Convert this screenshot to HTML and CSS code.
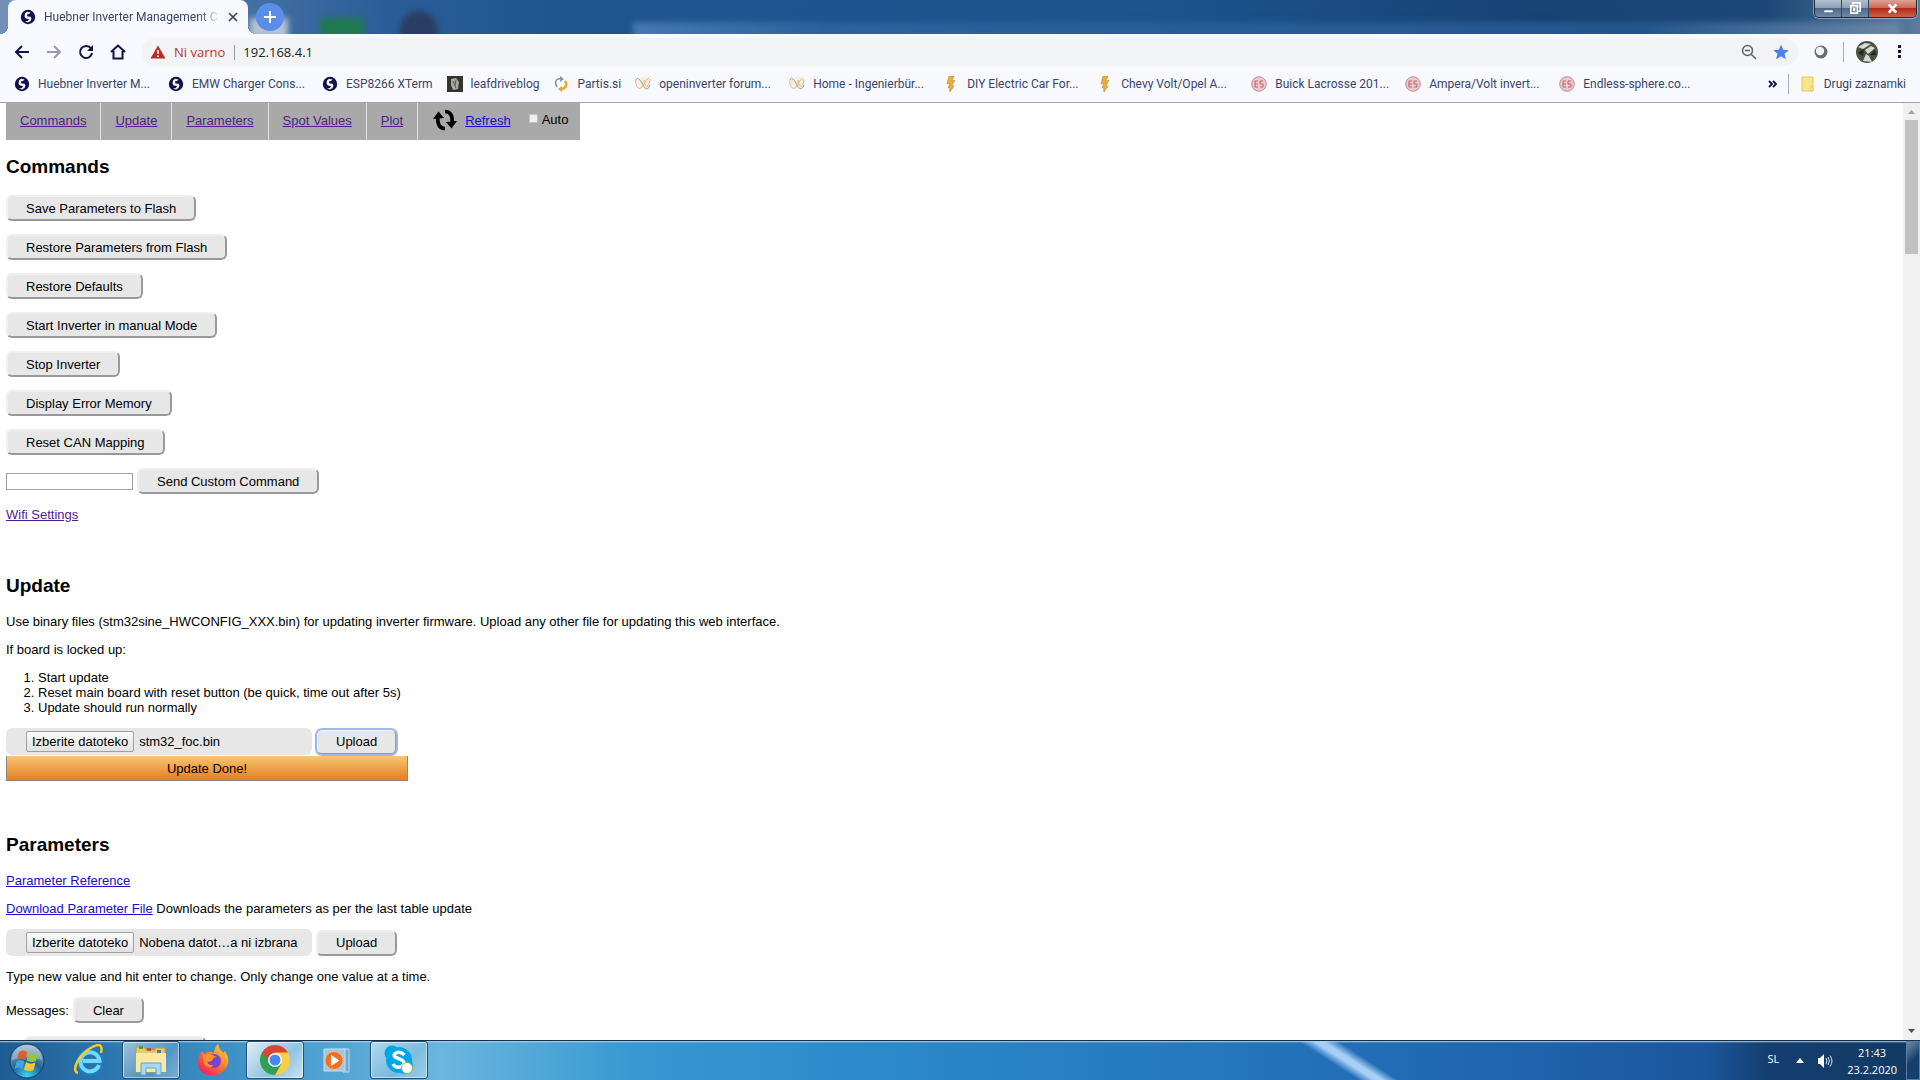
FILE: index.html
```
<!DOCTYPE html>
<html lang="sl">

<head>
    <meta charset="utf-8">
    <meta name="viewport" content="width=device-width, initial-scale=1">
    <title>Huebner Inverter Management Console</title>
    <link rel="stylesheet" href="styles.css">
</head>

<body>

    <!-- shared icons -->
    <svg class="sprite" aria-hidden="true">
        <symbol id="globe" viewBox="0 0 16 16">
            <circle cx="8" cy="8" r="7.200" fill="#15104a"/>
            <path d="M7 2.800 10.500 3.500 9 5 6.800 5.500 7.500 7.500 10.500 7.800 11.500 9.500 10.500 12 8 13.500 5 12.500 8 12 9 10 5.800 9.500 4.500 7.500 5 4.500z" fill="#f7f9fe"/>
        </symbol>
        <symbol id="wave" viewBox="0 0 16 16">
            <circle cx="9" cy="7" r="6.500" fill="#faf1d8"/>
            <path d="M1 4C3 0 6 5 8 9S13 15 15 9" fill="none" stroke="#8398b4"/>
            <path d="M1 4C0 10 4 15 7 11S10 4 14 2M9 4C10 12 14 13 15 3" fill="none" stroke="#eaa98a"/>
        </symbol>
        <symbol id="bolt" viewBox="0 0 16 16">
            <path d="M6 0 11 0 9 5 12 4 9 10 11 10 7 16 6.500 11 5 12 7 7 4 8z" fill="#e3b13d" stroke="#b98b35" stroke-width=".6"/>
        </symbol>
        <symbol id="es" viewBox="0 0 16 16">
            <circle cx="8" cy="8" r="7.300" fill="#e9c9cb" stroke="#c58c92"/>
            <path d="M7 5H4V11H7M4 8H7M12 5H9V8H12V11H9" fill="none" stroke="#b9646c"/>
        </symbol>
    </svg>

    <div class="window">

        <!-- TABS -->
        <header class="tabs">
            <div class="tab">
                <svg class="icon"><use href="#globe"/></svg>
                <span class="tab-title">Huebner Inverter Management C</span>
                <button class="tab-close" aria-label="Zapri zavihek"><svg viewBox="0 0 10 10"><path d="M1 1 9 9M9 1 1 9" stroke="#3a4468" stroke-width="1.700"/></svg></button>
            </div>
            <button class="new-tab" aria-label="Nov zavihek"><svg viewBox="0 0 12 12"><path d="M6 0V12M0 6H12" stroke="#fff" stroke-width="2"/></svg></button>
            <div class="desktop-peek">
                <i class="peek-white"></i>
                <i class="peek-green"></i>
                <i class="peek-dark"></i>
                <i class="peek-window"></i>
            </div>
            <div class="window-buttons">
                <button class="minimize" aria-label="Minimiraj"><svg viewBox="0 0 14 14"><path d="M2 8.500H12V11.500H2z" fill="#fff" stroke="#4b5a70" stroke-width=".7"/></svg></button>
                <button class="restore" aria-label="Obnovi"><svg viewBox="0 0 14 14"><path d="M4 3V1H12V10H10M2 4H9V12H2zM5 7V9H6V7z" fill="none" stroke="#fff" stroke-width="1.800"/></svg></button>
                <button class="close" aria-label="Zapri"><svg viewBox="0 0 14 14"><path d="M3 2.500 11 11.500M11 2.500 3 11.500" stroke="#fff" stroke-width="3"/></svg></button>
            </div>
        </header>

        <!-- TOOLBAR -->
        <div class="toolbar">
            <button class="tool" aria-label="Nazaj"><svg viewBox="0 0 16 16"><path d="M15 8H2M8 2 2 8 8 14" fill="none" stroke="#15104a" stroke-width="2"/></svg></button>
            <button class="tool" aria-label="Naprej"><svg viewBox="0 0 16 16"><path d="M1 8H14M8 2 14 8 8 14" fill="none" stroke="#9a98b4" stroke-width="2"/></svg></button>
            <button class="tool" aria-label="Znova naloži"><svg viewBox="0 0 16 16"><path d="M13 4.500A6 6 0 1 0 14 9" fill="none" stroke="#15104a" stroke-width="2"/><path d="M15 1V7H9z" fill="#15104a"/></svg></button>
            <button class="tool" aria-label="Domov"><svg viewBox="0 0 16 16"><path d="M1 8 8 1.500 15 8M3.500 7V14.500H12.500V7" fill="none" stroke="#15104a" stroke-width="2"/></svg></button>
            <div class="address">
                <svg class="icon" viewBox="0 0 16 16"><path d="M8 1.500 15.500 14.500H.5z" fill="#b52f27"/><path d="M8 6V10M8 11.500V13" stroke="#fff" stroke-width="1.600"/></svg>
                <span class="not-secure">Ni varno</span>
                <input class="url" type="text" value="192.168.4.1" aria-label="Naslov">
                <svg class="icon" viewBox="0 0 16 16"><circle cx="6.500" cy="6.500" r="5" fill="none" stroke="#5f6368" stroke-width="1.500"/><path d="M4 6.500H9M10.200 10.200 15 15" stroke="#5f6368" stroke-width="1.500"/></svg>
                <svg class="icon" viewBox="0 0 16 16"><path d="M8 .5 10.200 5.800 15.800 6.200 11.500 9.800 12.900 15.300 8 12.300 3.100 15.300 4.500 9.800.2 6.200 5.800 5.800z" fill="#4c7ff0"/></svg>
            </div>
            <svg class="icon extension" viewBox="0 0 16 16"><circle cx="8" cy="8" r="6.500" fill="#6c6c6c"/><circle cx="7" cy="7" r="4.200" fill="#f2f2f2"/></svg>
            <i class="divider"></i>
            <svg class="avatar" viewBox="0 0 22 22"><circle cx="11" cy="11" r="11" fill="#4c5240"/><path d="M2 6 9 2 15 3 7 8zM9 9 15 5 19 7 12 13zM7 20 10 13 13 15 16 21z" fill="#d5dad2"/><path d="M2 12 8 8 7 15zM14 14 19 9 20 14z" fill="#1f2721"/></svg>
            <button class="more" aria-label="Meni"><svg viewBox="0 0 4 14"><path d="M0 0H3V3H0zM0 5H3V8H0zM0 10H3V13H0z" fill="#15104a"/></svg></button>
        </div>

        <!-- BOOKMARKS -->
        <nav class="bookmarks">
            <a class="bookmark long" href="#"><svg class="icon"><use href="#globe"/></svg>Huebner Inverter M...</a>
            <a class="bookmark long" href="#"><svg class="icon"><use href="#globe"/></svg>EMW Charger Cons...</a>
            <a class="bookmark" href="#"><svg class="icon"><use href="#globe"/></svg>ESP8266 XTerm</a>
            <a class="bookmark" href="#"><svg class="icon" viewBox="0 0 16 16"><path d="M0 0H16V16H0z" fill="#34352f"/><path d="M4 3 9 2 12 6 11 13 6 14 4 9z" fill="#aaa99c"/><path d="M6 5 9 12M9 4 8 9" stroke="#55564e"/></svg>leafdriveblog</a>
            <a class="bookmark" href="#"><svg class="icon" viewBox="0 0 16 16"><path d="M8 3C3 2 1 6 4 11" fill="none" stroke="#8c95a0" stroke-width="1.500"/><path d="M7 0 11 3 7 6z" fill="#8c95a0"/><path d="M12 5C15 9 12 13 8 13" fill="none" stroke="#e8ac2b" stroke-width="2.500"/><path d="M9 10 5 13 9 16z" fill="#e8ac2b"/></svg>Partis.si</a>
            <a class="bookmark long" href="#"><svg class="icon"><use href="#wave"/></svg>openinverter forum...</a>
            <a class="bookmark long" href="#"><svg class="icon"><use href="#wave"/></svg>Home - Ingenierbür...</a>
            <a class="bookmark long" href="#"><svg class="icon"><use href="#bolt"/></svg>DIY Electric Car For...</a>
            <a class="bookmark long" href="#"><svg class="icon"><use href="#bolt"/></svg>Chevy Volt/Opel A...</a>
            <a class="bookmark long" href="#"><svg class="icon"><use href="#es"/></svg>Buick Lacrosse 201...</a>
            <a class="bookmark long" href="#"><svg class="icon"><use href="#es"/></svg>Ampera/Volt invert...</a>
            <a class="bookmark long" href="#"><svg class="icon"><use href="#es"/></svg>Endless-sphere.co...</a>
            <button class="overflow" aria-label="Več zaznamkov"><svg viewBox="0 0 10 8"><path d="M1 1 4 4 1 7M5 1 8 4 5 7" fill="none" stroke="#15104a" stroke-width="1.800"/></svg></button>
            <i class="divider"></i>
            <a class="bookmark other" href="#"><svg class="icon" viewBox="0 0 16 16"><path d="M2 1H13V15H2z" fill="#fbe58a" stroke="#e3c75c"/><path d="M11 10H13V15H11z" fill="#fff0ae" stroke="#e3c75c"/></svg>Drugi zaznamki</a>
        </nav>

        <div class="viewport">
            <main class="page">

                <!-- PAGE MENU -->
                <nav class="menu">
                    <a class="visited" href="#commands">Commands</a>
                    <a class="visited" href="#update">Update</a>
                    <a class="visited" href="#parameters">Parameters</a>
                    <a class="visited" href="#spot">Spot Values</a>
                    <a class="visited" href="#plot">Plot</a>
                    <div class="refresh">
                        <svg viewBox="0 0 24 24"><path d="M12 20.500C7 20.500 4.500 17 4.800 10M12 3.500C17 3.500 19.500 7 19.200 14" fill="none" stroke="#000" stroke-width="3.600"/><path d="M0 11 5.500 3.500 11 10zM24 13 18.500 20.500 13 14z" fill="#000"/></svg>
                        <a href="#">Refresh</a>
                        <label class="auto"><input type="checkbox">Auto</label>
                    </div>
                </nav>

                <section id="commands">
                    <h2>Commands</h2>
                    <div class="row"><button class="btn">Save Parameters to Flash</button></div>
                    <div class="row"><button class="btn">Restore Parameters from Flash</button></div>
                    <div class="row"><button class="btn">Restore Defaults</button></div>
                    <div class="row"><button class="btn">Start Inverter in manual Mode</button></div>
                    <div class="row"><button class="btn">Stop Inverter</button></div>
                    <div class="row"><button class="btn">Display Error Memory</button></div>
                    <div class="row"><button class="btn">Reset CAN Mapping</button></div>
                    <div class="row">
                        <input class="command" type="text" aria-label="Custom command">
                        <button class="btn">Send Custom Command</button>
                    </div>
                    <p><a class="visited" href="#">Wifi Settings</a></p>
                </section>

                <section id="update">
                    <h2>Update</h2>
                    <p>Use binary files (stm32sine_HWCONFIG_XXX.bin) for updating inverter firmware. Upload any other file for updating this web interface.</p>
                    <p>If board is locked up:</p>
                    <ol>
                        <li>Start update</li>
                        <li>Reset main board with reset button (be quick, time out after 5s)</li>
                        <li>Update should run normally</li>
                    </ol>
                    <div class="row upload">
                        <label class="file"><span class="choose">Izberite datoteko</span>stm32_foc.bin<input type="file"></label>
                        <button class="btn focused">Upload</button>
                    </div>
                    <div class="progress">Update Done!</div>
                </section>

                <section id="parameters">
                    <h2>Parameters</h2>
                    <p><a href="#">Parameter Reference</a></p>
                    <p><a href="#">Download Parameter File</a> Downloads the parameters as per the last table update</p>
                    <div class="row">
                        <label class="file"><span class="choose">Izberite datoteko</span>Nobena datot…a ni izbrana<input type="file"></label>
                        <button class="btn">Upload</button>
                    </div>
                    <p>Type new value and hit enter to change. Only change one value at a time.</p>
                    <div class="row">Messages: <button class="btn">Clear</button></div>
                    <div class="row indent"><button class="btn" aria-label="Toggle parameters"></button></div>
                </section>
            </main>

            <div class="scrollbar">
                <svg viewBox="0 0 17 17"><path d="M5 11 8.500 7 12 11z" fill="#a3a3a3"/></svg>
                <i class="thumb"></i>
                <svg viewBox="0 0 17 17"><path d="M5 6 8.500 10 12 6z" fill="#505050"/></svg>
            </div>
        </div>

        <!-- TASKBAR -->
        <footer class="taskbar">
            <button class="start" aria-label="Start">
                <svg viewBox="0 0 36 36">
                    <defs>
                        <radialGradient id="orb" cx=".5" cy=".95" r=".9"><stop offset="0" stop-color="#3fd5f5"/><stop offset=".5" stop-color="#1d6598"/><stop offset="1" stop-color="#93adc2"/></radialGradient>
                    </defs>
                    <circle cx="18" cy="18" r="17" fill="url(#orb)" stroke="#123d63"/>
                    <path d="M3 17A15 15 0 0 1 33 17Q18 12 3 17z" fill="#fff" opacity=".3"/>
                    <path d="M10 9Q14 6 18 9L16 17Q12 14 8 17z" fill="#e8592b"/>
                    <path d="M19.500 10Q24 13 29 10L27 18Q22 20 17.500 17.500z" fill="#94c83d"/>
                    <path d="M7.500 18.500Q12 16 15.500 18.500L13.500 26Q10 23 5.500 26z" fill="#40a5e0"/>
                    <path d="M17 19Q21 22 26.500 19.500L24.500 27Q20 29 15 26.500z" fill="#fbc52d"/>
                </svg>
            </button>
            <button class="task" aria-label="Internet Explorer">
                <svg viewBox="0 0 32 32">
                    <path d="M27 21A10.500 10.500 0 1 1 27.500 17H11" fill="none" stroke="#1680c8" stroke-width="6"/>
                    <path d="M26 21A9.500 9.500 0 1 1 26.500 17H10" fill="none" stroke="#74d8fa" stroke-width="4"/>
                    <path d="M5 29C-2 27 5 12 16 5S30 1 28 9" fill="none" stroke="#f5cb24" stroke-width="2.500"/>
                </svg>
            </button>
            <button class="task open" aria-label="Raziskovalec">
                <svg viewBox="0 0 32 32">
                    <path d="M1 6V3H9L11 6H20V4H30V28H1z" fill="#ecc965" stroke="#c69d3c"/>
                    <path d="M4 2H8V5H4z" fill="#3aa35b"/><path d="M12 4H16V7H12z" fill="#d9443a"/><path d="M22 6H26V9H22z" fill="#3a82c9"/>
                    <path d="M1 9H31V28H1z" fill="#fbe9a2"/>
                    <path d="M6 31V19H26V31H21V24H11V31z" fill="#a7d9f5" stroke="#5ba7d9"/>
                </svg>
            </button>
            <button class="task" aria-label="Firefox">
                <svg viewBox="0 0 32 32">
                    <defs><linearGradient id="fox" x1="1" y1="0" x2=".2" y2="1"><stop offset="0" stop-color="#ffe14a"/><stop offset=".45" stop-color="#ff8a26"/><stop offset="1" stop-color="#ee1f5c"/></linearGradient></defs>
                    <path d="M5 7 8 10Q12 6 17 9Q17 4 21 0Q22 5 26 9L28 7Q36 20 25 28C17 34 6 32 2 24Q-1 15 5 7z" fill="url(#fox)"/>
                    <circle cx="17" cy="17" r="7" fill="#7b42cf"/>
                    <path d="M6 11Q13 9 20 13Q16 13 15 17L10 18Q12 22 17 21Q12 26 7 20z" fill="#ff9424"/>
                </svg>
            </button>
            <button class="task open active" aria-label="Chrome">
                <svg viewBox="0 0 32 32">
                    <circle cx="16" cy="16" r="15" fill="#fbce43"/>
                    <path d="M16 16 3 8.500A15 15 0 0 0 16 31L22.500 19.800z" fill="#2f9e58"/>
                    <path d="M16 16H9.500L3 8.500A15 15 0 0 1 29 8.500H16z" fill="#da4437"/>
                    <circle cx="16" cy="16" r="7" fill="#fff"/><circle cx="16" cy="16" r="5.500" fill="#4a86ee"/>
                </svg>
            </button>
            <button class="task" aria-label="Media Player">
                <svg viewBox="0 0 32 32">
                    <path d="M22 5H28V28H22z" fill="#6fa9d3" stroke="#b8dbf1"/><path d="M3 5H24V27H3z" fill="#9ac9e8" stroke="#c4e2f4"/>
                    <circle cx="13" cy="16.500" r="9" fill="#ee7023" stroke="#f9b78a"/><path d="M10 11 18.500 16.500 10 22z" fill="#fff"/>
                </svg>
            </button>
            <button class="task open" aria-label="Skype">
                <svg viewBox="0 0 32 32">
                    <circle cx="16" cy="16" r="13" fill="#00a5e8"/><circle cx="9" cy="9" r="7.500" fill="#00a5e8"/><circle cx="22" cy="22" r="8" fill="#00a5e8"/>
                    <path d="M21.500 11Q16 6 11.500 10C9 15 21 14 21 19 20 25 12 24 10 20" fill="none" stroke="#fff" stroke-width="3.500"/>
                    <circle cx="24" cy="24" r="5.500" fill="#fff" stroke="#82bd3c"/>
                </svg>
            </button>

            <div class="tray">
                <span class="lang">SL</span>
                <svg class="tray-arrow" viewBox="0 0 8 5"><path d="M0 5 4 0 8 5z" fill="#fff"/></svg>
                <svg class="volume" viewBox="0 0 16 16"><path d="M1 5H3L7 1V15L3 11H1z" fill="#fff"/><path d="M9 5Q11 8 9 11M11 4Q14 8 11 12M13 2.500Q17 8 13 13.500" fill="none" stroke="#dce8f5"/></svg>
                <time class="clock">21:43<br>23.2.2020</time>
                <button class="show-desktop" aria-label="Pokaži namizje"></button>
            </div>
        </footer>
    </div>

</body>

</html>
```
FILE: styles.css
```
* {
    box-sizing: border-box;
}

body {
    margin: 0;
    font-family: "Liberation Sans", Arial, sans-serif;
    font-size: 13px;
    line-height: 15px;
    color: #000;
    background: #fff;
}

button {
    border: none;
    padding: 0;
    background: none;
    font: inherit;
}

svg {
    display: block;
    flex: none;
}

a {
    color: #1a0dc8;
}

.sprite {
    position: absolute;
    width: 0;
    height: 0;
}

.window {
    display: flex;
    flex-direction: column;
    height: 100vh;
    overflow: hidden;
}

.icon {
    width: 16px;
    height: 16px;
}

.divider {
    width: 1px;
    height: 20px;
    background: #a9adba;
}

/* Tabs */
.tabs {
    position: relative;
    flex: none;
    display: flex;
    height: 34px;
    padding-left: 8px;
    background: linear-gradient(90deg, #7391b8, #2b5e98 20%, #1f548f 30%, #1d548d 60%, #164274 80%, #1c4877 92%, #5c7b9d);
    font-family: Roboto, "Open Sans", sans-serif;
    font-size: 12px;
}

.tab {
    position: relative;
    z-index: 1;
    display: flex;
    align-items: center;
    gap: 8px;
    width: 240px;
    padding: 0 10px 0 12px;
    background: #f7f9fe;
    border-radius: 8px 8px 0 0;
    color: #3a4468;
}

/* flared feet of the tab */
.tab::before,
.tab::after {
    content: "";
    position: absolute;
    bottom: 0;
    width: 8px;
    height: 8px;
}

.tab::before {
    right: 100%;
    background: radial-gradient(circle at 0 0, transparent 8px, #f7f9fe 8px);
}

.tab::after {
    left: 100%;
    background: radial-gradient(circle at 100% 0, transparent 8px, #f7f9fe 8px);
}

.tab-title {
    flex: 1;
    white-space: nowrap;
    -webkit-mask-image: linear-gradient(90deg, #000 88%, transparent);
    mask-image: linear-gradient(90deg, #000 88%, transparent);
}

.tab-close svg {
    width: 10px;
    height: 10px;
}

.new-tab {
    z-index: 1;
    display: flex;
    align-items: center;
    justify-content: center;
    align-self: center;
    width: 28px;
    height: 28px;
    margin-left: 8px;
    border-radius: 50%;
    background: #5a8ee8;
}

.new-tab svg {
    width: 12px;
    height: 12px;
}

/* blurred desktop behind the glass */
.desktop-peek {
    position: absolute;
    inset: 0;
    overflow: hidden;
}

.desktop-peek i {
    position: absolute;
    filter: blur(3px);
}

.peek-white {
    left: 250px;
    top: 18px;
    width: 38px;
    height: 20px;
    background: #b9c3d6;
}

.peek-green {
    left: 321px;
    top: 18px;
    width: 43px;
    height: 20px;
    background: #1f7a50;
}

.peek-dark {
    left: 400px;
    top: 11px;
    width: 38px;
    height: 38px;
    border-radius: 50%;
    background: #2b3c62;
}

.peek-window {
    left: 633px;
    right: 20px;
    top: 22px;
    height: 20px;
    background: linear-gradient(90deg, #4678b0, #2c639d 15%, #24568d 80%, #6a86a5);
}

.window-buttons {
    z-index: 1;
    display: flex;
    height: 18px;
    margin-left: auto;
    margin-right: 3px;
    border: 1px solid #1b2a3f;
    border-top: none;
    border-radius: 0 0 5px 5px;
    box-shadow: 0 0 0 1px rgba(255, 255, 255, .4);
    overflow: hidden;
}

.window-buttons button {
    display: flex;
    align-items: center;
    justify-content: center;
    width: 27px;
    border-right: 1px solid #33465f;
    background: linear-gradient(#b4c0cf, #8b9db4 48%, #50678a 50%, #7089a8);
}

.window-buttons .close {
    width: 47px;
    border: none;
    background: linear-gradient(#dda397, #cc6655 48%, #b32a18 50%, #cd6147);
}

.window-buttons svg {
    width: 13px;
    height: 13px;
}

/* Toolbar */
.toolbar {
    flex: none;
    display: flex;
    align-items: center;
    height: 36px;
    padding: 0 14px;
    background: #f7f9fe;
    font-family: "Open Sans", "Noto Sans", sans-serif;
}

.tool {
    margin-right: 16px;
}

.tool svg {
    width: 16px;
    height: 16px;
}

.address {
    flex: 1;
    display: flex;
    align-items: center;
    gap: 8px;
    height: 28px;
    padding: 0 9px 0 8px;
    border-radius: 14px;
    background: #f1f3f4;
}

.address .icon + .icon {
    margin-left: 8px;
}

.not-secure {
    padding-right: 9px;
    border-right: 1px solid #9a9da3;
    color: #b8382f;
}

.url {
    flex: 1;
    min-width: 0;
    padding: 0;
    border: none;
    background: none;
    font: inherit;
    color: #222;
    outline: none;
}

.extension {
    margin: 0 14px 0 15px;
}

.avatar {
    width: 22px;
    height: 22px;
    margin: 0 20px 0 12px;
}

.more {
    margin-right: 4px;
}

.more svg {
    width: 4px;
    height: 14px;
}

/* Bookmarks */
.bookmarks {
    flex: none;
    display: flex;
    align-items: center;
    height: 33px;
    padding: 0 14px 4px;
    border-bottom: 1px solid #a2a5ad;
    background: #f7f9fe;
    font-family: Roboto, "Open Sans", sans-serif;
    font-size: 12px;
}

.bookmark {
    flex: none;
    display: flex;
    align-items: center;
    gap: 8px;
    padding-right: 14px;
    color: #3a4468;
    text-decoration: none;
    white-space: nowrap;
}

.bookmark.long {
    width: 154px;
    padding-right: 0;
}

.overflow {
    margin: 0 10px 0 auto;
}

.overflow svg {
    width: 10px;
    height: 8px;
}

.bookmark.other {
    padding: 0 0 0 11px;
}

/* Page */
.viewport {
    flex: 1;
    display: flex;
    min-height: 0;
}

.page {
    flex: 1;
    padding: 0 6px;
    overflow: hidden;
}

.menu {
    display: flex;
    width: max-content;
    height: 37px;
    background: #a9a9a9;
}

.menu > a {
    padding: 10px 14px;
    border-right: 1px solid #e4e4e4;
}

.visited {
    color: #551a8b;
}

.refresh {
    display: flex;
    align-items: flex-start;
    padding: 5px 12px 0 15px;
}

.refresh a {
    padding: 5px 18px 0 8px;
}

.refresh svg {
    width: 24px;
    height: 24px;
}

.auto {
    display: flex;
    gap: 4px;
    padding-top: 4px;
}

.auto input {
    appearance: none;
    width: 9px;
    height: 9px;
    margin: 2px 0 0;
    border: 1px solid #c2c2c2;
    background: #eee;
}

h2 {
    margin: 0 0 17px;
    font-size: 19px;
    line-height: 22px;
}

section {
    padding-top: 16px;
}

section + section {
    padding-top: 53px;
}

p {
    margin: 13px 0;
}

section > :last-child {
    margin-bottom: 0;
}

ol {
    margin: 13px 0;
    padding-left: 32px;
}

.row {
    display: flex;
    align-items: center;
    gap: 4px;
    margin: 13px 0;
}

.btn {
    height: 26px;
    padding: 0 18px;
    border: 2px solid;
    border-color: #efefef #999 #999 #efefef;
    border-radius: 6px;
    background: #e7e7e7;
    color: #000;
}

.btn.focused {
    outline: 2px solid #9db9ee;
    outline-offset: -1px;
}

.command {
    width: 127px;
    height: 17px;
    border: 1px solid #a0a0a0;
}

.file {
    position: relative;
    display: flex;
    align-items: center;
    gap: 5px;
    width: 306px;
    height: 27px;
    padding-left: 20px;
    border-radius: 6px;
    background: #e7e7e7;
}

.file input {
    position: absolute;
    inset: 0;
    width: 100%;
    opacity: 0;
}

.choose {
    padding: 1px 5px;
    border: 1px solid #a0a0a0;
    border-radius: 2px;
    background: linear-gradient(#fafafa, #e2e2e2);
    line-height: 17px;
}

.upload {
    margin-bottom: 1px;
}

.progress {
    width: 402px;
    height: 25px;
    border: 1px solid #8f8878;
    border-top: none;
    background: linear-gradient(#f7c673, #e67e22);
    line-height: 25px;
    text-align: center;
}

.indent {
    padding-left: 18px;
}

.indent .btn {
    width: 182px;
}

/* Scrollbar */
.scrollbar {
    display: flex;
    flex-direction: column;
    width: 17px;
    background: #f1f1f1;
}

.scrollbar svg {
    width: 17px;
    height: 17px;
}

.scrollbar svg:last-child {
    margin-top: auto;
}

.thumb {
    height: 134px;
    margin: 0 2px;
    background: #c1c1c1;
}

/* Taskbar */
.taskbar {
    flex: none;
    display: flex;
    height: 40px;
    padding-left: 9px;
    border-top: 1px solid #14304d;
    background:
        linear-gradient(#b5d3ec, transparent 2px),
        linear-gradient(to top right, transparent 45%, #a8d0f7 49%, #a8d0f7 51%, transparent 55%) 73% -40px / 200px 129px no-repeat,
        linear-gradient(90deg, #1d5c92, #2f7db5 7%, #4499cd 14%, #6ab6de 23%, #3898d1 33%, #2c8acb 45%, #2678be 62%, #1f66b0 78%, #1b569b 89%, #143f70 92%, #123963);
}

.start {
    margin-right: 15px;
}

.start svg {
    width: 36px;
    height: 36px;
}

.task {
    display: flex;
    align-items: center;
    justify-content: center;
    width: 58px;
    height: 38px;
    margin-right: 4px;
    border: 1px solid transparent;
    border-radius: 3px;
}

.task svg {
    width: 32px;
    height: 32px;
}

.open {
    border-color: #21506f;
    background: linear-gradient(135deg, rgba(255, 255, 255, .55), rgba(255, 255, 255, .15) 60%, rgba(255, 255, 255, .35));
    box-shadow: inset 0 0 0 1px rgba(255, 255, 255, .5);
}

.active {
    background: linear-gradient(135deg, rgba(255, 255, 255, .85), rgba(255, 255, 255, .4) 60%, rgba(255, 255, 255, .7));
}

.tray {
    display: flex;
    align-items: center;
    margin-left: auto;
    color: #fff;
    font-family: "Open Sans", "Noto Sans", sans-serif;
    font-size: 11px;
}

.lang {
    padding-bottom: 4px;
}

.tray-arrow {
    width: 8px;
    height: 5px;
    margin: 0 13px 0 17px;
}

.volume {
    width: 16px;
    height: 16px;
}

.clock {
    margin: 0 9px 0 14px;
    line-height: 17px;
    text-align: center;
}

.show-desktop {
    align-self: stretch;
    width: 14px;
    border: 1px solid #5a7da3;
    background: linear-gradient(135deg, #6f8cab, #173f6b 50%);
}
```
